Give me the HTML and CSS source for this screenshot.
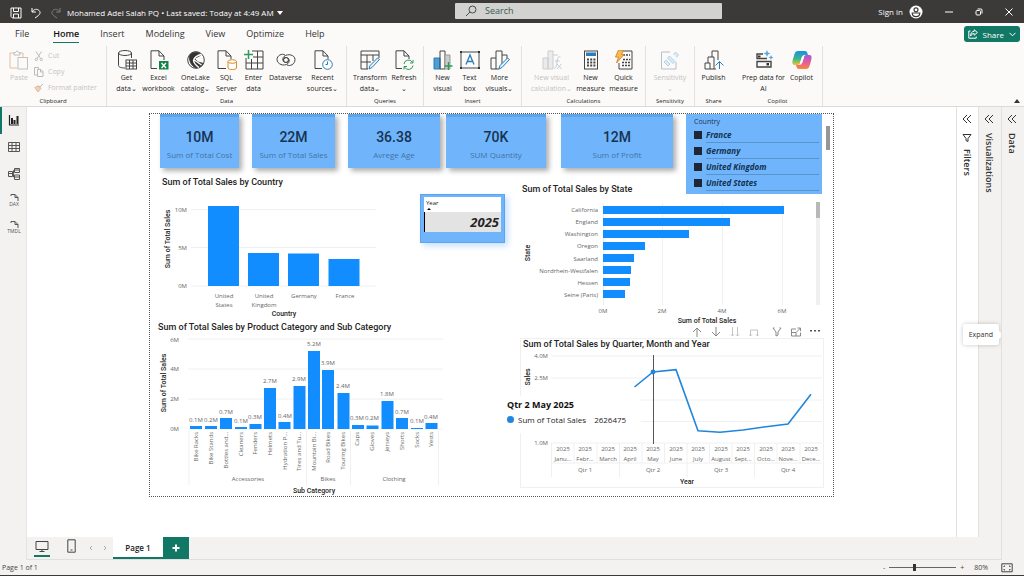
FILE: index.html
```html
<!DOCTYPE html>
<html lang="en">
<head>
<meta charset="utf-8">
<title>Mohamed Adel Salah PQ</title>
<link rel="stylesheet" href="styles.css">
</head>
<body>
<div class="app">
  <header class="titlebar">
    <div class="title-left">
      <button class="tb-btn" aria-label="Save"><svg width="12" height="12" viewBox="0 0 12 12" class="ln"><path d="M1 1h10v10H2.500L1 9.500zM3.500 1v3.500h5V1M3.500 11V7h5v4"/></svg></button>
      <button class="tb-btn" aria-label="Undo"><svg width="12" height="12" viewBox="0 0 12 12" class="ln"><path d="M2 1v4h4M2 5c2-3 5-3.500 7-1.500s1.500 4-4 7.500"/></svg></button>
      <button class="tb-btn dim" aria-label="Redo"><svg width="12" height="12" viewBox="0 0 12 12" class="ln"><path d="M10 1v4H6M10 5c-2-3-5-3.500-7-1.500s-1.500 4 4 7.500"/></svg></button>
      <button class="doc-name">Mohamed Adel Salah PQ • Last saved: Today at 4:49 AM <svg width="6" height="4" viewBox="0 0 6 4"><path d="M0 0h6L3 4z" fill="#fff"/></svg></button>
    </div>
    <label class="search"><svg width="12" height="12" viewBox="0 0 12 12" class="ln"><circle cx="7.500" cy="4.500" r="3.500"/><path d="M5 7L1 11"/></svg><input type="search" placeholder="Search" aria-label="Search"></label>
    <div class="title-right">
      <button class="signin">Sign in <svg width="14" height="14" viewBox="0 0 14 14"><circle cx="7" cy="7" r="6.500" fill="#fff"/><circle cx="7" cy="4.800" r="2" fill="none" stroke="#3b3a39" stroke-width="1.200"/><path d="M3.200 8h7.600c0 2.500-1.600 3.600-3.800 3.600S3.200 10.500 3.200 8z" fill="none" stroke="#3b3a39" stroke-width="1.200"/></svg></button>
      <button class="win-btn" aria-label="Minimize"><svg width="8" height="8" viewBox="0 0 8 8" class="ln"><path d="M0 4h8"/></svg></button>
      <button class="win-btn" aria-label="Restore"><svg width="8" height="8" viewBox="0 0 8 8" class="ln"><rect x="1" y="2.500" width="4.500" height="4.500" rx="1"/><path d="M2.500 1h3.500q1 0 1 1v3.500"/></svg></button>
      <button class="win-btn" aria-label="Close"><svg width="8" height="8" viewBox="0 0 8 8" class="ln"><path d="M.5.5l7 7M7.500.5l-7 7"/></svg></button>
    </div>
  </header>

  <nav class="menu">
    <a href="#">File</a><a href="#" class="active">Home</a><a href="#">Insert</a><a href="#">Modeling</a><a href="#">View</a><a href="#">Optimize</a><a href="#">Help</a>
    <button class="share"><svg width="10" height="10" viewBox="0 0 10 10" class="ln"><path d="M2.500 2H.8v7.200h7.400V7.500M6.200.8l3.200 2.700-3.200 2.700V4.600C4.500 4.600 3.500 5.200 2.600 7c0-2.800 1.400-4.600 3.600-4.700z"/></svg>Share<svg width="7" height="5" viewBox="0 0 7 5" class="ln"><path d="M.5.8l3 3 3-3"/></svg></button>
  </nav>

  <section class="ribbon" aria-label="Home ribbon">
    <div class="group g-clip">
      <div class="tools">
        <button class="tool disabled w-paste"><svg viewBox="0 0 20 20" class="ico"><path d="M6 3H1v15h7M10 3h4v4" stroke="#e9a070"/><path d="M5 5V2.500h1.500L8 .8l1.500 1.700H11V5z" stroke="#aaa"/><rect x="9" y="7.500" width="9.500" height="11.500" stroke="#aaa"/></svg>Paste</button>
        <div class="clip-list">
          <button><svg viewBox="0 0 10 10" class="mini"><path d="M2 .5l4.500 7M7.500.5L3 7.500"/><circle cx="2.300" cy="8.400" r="1.200"/><circle cx="7.300" cy="8.400" r="1.200"/></svg>Cut</button>
          <button><svg viewBox="0 0 10 10" class="mini"><path d="M3 8H.5V.5h4V2M3.500 2.500h3.500l2 2v5H3.500zM6.500 2.500V5H9"/></svg>Copy</button>
          <button><svg viewBox="0 0 10 10" class="mini"><path d="M.8 4.500L4 3l2.500 3L4 9z" fill="#f4d2b6" stroke="#e6b893"/><path d="M4.500 2.500l2.500 3M6 3.800L9 1"/></svg>Format painter</button>
        </div>
      </div>
      <h2>Clipboard</h2>
    </div>
    <div class="group g-data">
      <div class="tools">
        <button class="tool w-26"><svg viewBox="0 0 20 20" class="ico"><ellipse cx="8" cy="3" rx="6.500" ry="2.500"/><path d="M1.500 3v12.500C1.500 17 4 18 8 18M14.500 3v5"/><rect x="9" y="10" width="10.500" height="9" fill="#fff"/><path d="M9 13h10.500M9 16h10.500M12.500 10v9M16 10v9"/></svg>Get<br>data⌄</button>
        <button class="tool w-38"><svg viewBox="0 0 20 20" class="ico"><path d="M8 18.500H2V.8h8L15 6v4M10 .8V6h5"/><rect x="10" y="11" width="9.500" height="8.500" fill="#14834a" stroke="none"/><path d="M12.500 13l4.500 5M17 13l-4.500 5" stroke="#fff" stroke-width="1.300"/></svg>Excel<br>workbook</button>
        <button class="tool w-36"><svg viewBox="0 0 20 20" class="ico"><circle cx="10" cy="10" r="8.300"/><path d="M3.500 6Q5 1 12 2.500 14 3 15 5L8.500 8.500Q11 13 17.500 13.500 14 19 9 17.500 3 14 3.500 6z" fill="#333"/><path d="M15.500 4.500Q9 5.500 7.500 10.500 8 14 13 17.500M7.500 9.500l8 5.500" stroke="#fff" stroke-width="1.400"/></svg>OneLake<br>catalog⌄</button>
        <button class="tool w-26"><svg viewBox="0 0 20 20" class="ico"><path d="M9 18.500H1V.8h8L14 6v3M9 .8V6h5"/><path d="M11 11.500v6.500c0 2 8.500 2 8.500 0v-6.500" fill="#fff" stroke="#d98a2b"/><ellipse cx="15.200" cy="11.500" rx="4.200" ry="1.800" fill="#fff" stroke="#d98a2b"/></svg>SQL<br>Server</button>
        <button class="tool w-28"><svg viewBox="0 0 20 20" class="ico"><path d="M8 1h11v18H2V8M2 13h17M9 7h10M7.500 9v10M13.500 1v18"/><path d="M4.500 0v9M0 4.500h9" stroke="#2f9b58" stroke-width="1.500"/></svg>Enter<br>data</button>
        <button class="tool w-36"><svg viewBox="0 0 20 20" class="ico"><path d="M12.500 10a2.500 2.500 0 1 1-2-2.500c3 .5 3.500 4 1.500 6C8 17 1 14 1 9.500 1 5.500 6 3 9 5M7.500 10a2.500 2.500 0 1 1 2 2.500c-3-.5-3.500-4-1.500-6C12 3 19 5 19 9.500c0 5-5 7-8 5.500"/></svg>Dataverse</button>
        <button class="tool w-38"><svg viewBox="0 0 20 20" class="ico"><path d="M9 18.500H2V.8h8L15 6v3M10 .8V6h5"/><circle cx="14.500" cy="14.500" r="4.800" fill="#fff" stroke="#2b7cb8"/><path d="M14.500 11.500v3h-2" stroke="#2b7cb8"/></svg>Recent<br>sources⌄</button>
      </div>
      <h2>Data</h2>
    </div>
    <div class="group g-query">
      <div class="tools">
        <button class="tool w-38"><svg viewBox="0 0 20 20" class="ico"><path d="M8 19H1V1h18v7M1 5h18M1 12h10M7 5v14M13 5v6"/><path d="M19.500 9.500L12 17.500l-3 1.500.8-3.200L17.500 8z" fill="#e4f1fa" stroke="#2b7cb8"/></svg>Transform<br>data⌄</button>
        <button class="tool w-30"><svg viewBox="0 0 20 20" class="ico"><path d="M8 18.500H2V.8h8L15 6v3M10 .8V6h5"/><path d="M10 14a4.500 4.500 0 0 1 8.500-1.500M19 10v3h-3M19 15.500a4.500 4.500 0 0 1-8.500 1.500M10 19.500v-3h3" stroke="#2f9b58"/></svg>Refresh<br>⌄</button>
      </div>
      <h2>Queries</h2>
    </div>
    <div class="group g-insert">
      <div class="tools">
        <button class="tool w-28"><svg viewBox="0 0 20 20" class="ico"><path d="M1 8h6v11H1z" fill="#4a9fd8" stroke="#2b7cb8"/><path d="M7 1h5v18H7z"/><path d="M12 5h5v14h-5z" fill="#ccc" stroke="#999"/><path d="M15.500 12v8M11.500 16h8" stroke="#2f9b58" stroke-width="1.400"/></svg>New<br>visual</button>
        <button class="tool w-26"><svg viewBox="0 0 20 20" class="ico"><rect x="1" y="2" width="18" height="16"/><path d="M6 14.500L10 5l4 9.500M7.500 11.500h5" stroke="#2b7cb8" stroke-width="1.300"/><path d="M0 1h2v2H0zM18 1h2v2h-2zM0 17h2v2H0zM18 17h2v2h-2z" fill="#333" stroke="none"/></svg>Text<br>box</button>
        <button class="tool w-34"><svg viewBox="0 0 20 20" class="ico"><path d="M9 19H1V8h5v11M6 8V1h6v13M12 5h5v4"/><path d="M19.500 9.500L12 17.500l-3 1.500.8-3.200L17.500 8z" fill="#e4f1fa" stroke="#2b7cb8"/></svg>More<br>visuals⌄</button>
      </div>
      <h2>Insert</h2>
    </div>
    <div class="group g-calc">
      <div class="tools">
        <button class="tool disabled w-44"><svg viewBox="0 0 20 20" class="ico"><path d="M1 8h5v11H1zM6 1h5v18H6z" fill="#e6e6e6" stroke="#bbb"/><path d="M11 5h5" stroke="#bbb"/><path d="M18.500 7c-3-1-3 2-3.500 5s-1 7-3 6M13 11h4.500M15 14l4.500 5M19.500 14L15 19" stroke="#a9bccb"/></svg>New visual<br>calculation⌄</button>
        <button class="tool w-34"><svg viewBox="0 0 20 20" class="ico"><rect x="3.500" y="1" width="13" height="18"/><path d="M5 2.500h10v3.500H5z" fill="#2b7cb8" stroke="none"/><path d="M6 9.500h8.500M6 12.500h8.500M6 15.500h8.500" stroke-width="2" stroke-dasharray="2 1.200"/></svg>New<br>measure</button>
        <button class="tool w-32"><svg viewBox="0 0 20 20" class="ico"><path d="M8 1h10v18H5v-6"/><path d="M9 5h7M9 9.500h7.500M8 12.500h8.500M8 15.500h8.500" stroke-width="1.600" stroke-dasharray="2 1"/><path d="M4.500 0h5L7.500 4.500H10L2.500 13 4.500 7H1.500z" fill="#f5bd58" stroke="#d98a2b"/></svg>Quick<br>measure</button>
      </div>
      <h2>Calculations</h2>
    </div>
    <div class="group g-sens">
      <div class="tools">
        <button class="tool disabled w-40"><svg viewBox="0 0 20 20" class="ico"><path d="M10 2H1.500v17H16v-7" stroke="#9ab"/><path d="M13.500 4.500l2-2.500 3 3-2 2.500M9.500 6l5.500 5.500-2 2L7.500 8zM6 10l4 4-2 2-4-4z" fill="#cfe6f6" stroke="#8fc3e6"/></svg>Sensitivity<br>⌄</button>
      </div>
      <h2>Sensitivity</h2>
    </div>
    <div class="group g-share">
      <div class="tools">
        <button class="tool w-32"><svg viewBox="0 0 20 20" class="ico"><path d="M12 19H1v-6h5v6M4 13V7h6v12M8 7V1h6v9"/><path d="M15.500 19v-7M11.500 15.500l4-4 4 4" stroke="#2b7cb8"/></svg>Publish</button>
      </div>
      <h2>Share</h2>
    </div>
    <div class="group g-copilot">
      <div class="tools">
        <button class="tool w-48"><svg viewBox="0 0 20 20" class="ico"><path d="M9 4H3v4.500h10M3 11.500h14V17H3z" stroke-width="1.400"/><path d="M4 5.500h2.500v2H4zM12.500 13H15v2.500h-2.500z" fill="#333" stroke="none"/><path d="M13 0l1 2.500L16.500 3.500 14 4.500 13 7l-1-2.500-2.500-1L12 2.500zM17 5l.8 1.700L19.500 7.500l-1.700.8L17 10l-.8-1.700-1.700-.8 1.700-.8z" fill="#5aa9dc" stroke="none"/></svg>Prep data for<br>AI</button>
        <button class="tool w-28"><svg viewBox="0 0 20 20" class="ico"><defs><linearGradient id="cpa" x1="0" y1="0" x2="0" y2="1"><stop offset="0" stop-color="#1a8fe6"/><stop offset=".55" stop-color="#38b78c"/><stop offset="1" stop-color="#f0c52b"/></linearGradient><linearGradient id="cpb" x1="0" y1="0" x2="0" y2="1"><stop offset="0" stop-color="#a356e0"/><stop offset=".6" stop-color="#ef5f8e"/><stop offset="1" stop-color="#f78b3c"/></linearGradient></defs><path d="M6 1h7c2 0 2.500 2 3 4h-3c-2 0-3 1-3.500 3L8 13c-.5 1.500-1.500 2-3 2H3c-3 0-3-2.500-2-6l1.500-5C3.200 2 4 1 6 1z" fill="url(#cpa)" stroke="none"/><path d="M14 19H7c-2 0-2.500-2-3-4h3c2 0 3-1 3.500-3L12 7c.5-1.500 1.500-2 3-2h2c3 0 3 2.500 2 6l-1.500 5c-.7 2-1.500 3-3.500 3z" fill="url(#cpb)" stroke="none"/><path d="M12 7l-2 6H8l2-6z" fill="#fff" stroke="none"/></svg>Copilot</button>
      </div>
      <h2>Copilot</h2>
    </div>
    <button class="collapse" aria-label="Collapse ribbon"><svg width="6" height="4" viewBox="0 0 6 4"><path d="M0 4l3-4 3 4z" fill="#333"/></svg></button>
  </section>

  <div class="body">
    <nav class="rail">
      <button class="on" aria-label="Report view"><svg viewBox="0 0 12 12" class="ln"><path d="M1.500 1v10h9.500" stroke-width="1.200"/><path d="M4 4v6M6.500 6v4M9.500 2v8" stroke-width="2"/></svg></button>
      <button aria-label="Table view"><svg viewBox="0 0 12 12" class="ln"><path d="M.5 1.500h11v9H.5zM.5 4.500h11M.5 7.500h11M4 1.500v9M8 1.500v9"/></svg></button>
      <button aria-label="Model view"><svg viewBox="0 0 12 12" class="ln"><path d="M.5 3.500h4v5h-4zM.5 5.500h4M6.500.5h5v4h-5zM6.500 2h5M6.500 7h5v4.500h-5zM6.500 9h5M4.500 5.500h1v-3h1M5.500 5.500v3.500h1"/></svg></button>
      <button aria-label="DAX query view"><svg viewBox="0 0 12 12" class="ln"><path d="M3 2V.5h4l3 3V7M7 .5v3h3"/></svg><small>DAX</small></button>
      <button aria-label="TMDL view"><svg viewBox="0 0 12 12" class="ln"><path d="M3 2V.5h4l3 3V7M7 .5v3h3"/></svg><small>TMDL</small></button>
    </nav>

    <div class="center">
      <div class="stage">
        <main class="workspace">
          <div class="canvas">
            <div class="cards">
              <article class="card c1"><strong>10M</strong><span>Sum of Total Cost</span></article>
              <article class="card c2"><strong>22M</strong><span>Sum of Total Sales</span></article>
              <article class="card c3"><strong>36.38</strong><span>Avrege Age</span></article>
              <article class="card c4"><strong>70K</strong><span>SUM Quantity</span></article>
              <article class="card c5"><strong>12M</strong><span>Sum of Profit</span></article>
              <fieldset class="country">
                <legend>Country</legend>
                <label><input type="checkbox"><span>France</span></label>
                <label><input type="checkbox"><span>Germany</span></label>
                <label><input type="checkbox"><span>United Kingdom</span></label>
                <label><input type="checkbox"><span>United States</span></label>
              </fieldset>
              <div class="thumb"></div>
            </div>
            <div class="visuals">
              <div class="left">
                <div class="top-left">
                  <section class="by-country">
                    <h3>Sum of Total Sales by Country</h3>
                    <svg viewBox="150 188 270 131" class="chart" role="img" aria-label="Sum of Total Sales by Country">
                      <path class="grid" d="M191 209.500h185M191 247.500h185M191 286h185"/>
                      <g class="bars"><rect x="208" y="206" width="31" height="80"/><rect x="248" y="253" width="31" height="33"/><rect x="288" y="253.500" width="31" height="32.500"/><rect x="328.500" y="259" width="31" height="27"/></g>
                      <g class="lab end"><text x="187" y="212">10M</text><text x="187" y="250">5M</text><text x="187" y="288">0M</text></g>
                      <g class="lab mid"><text x="224" y="298">United</text><text x="224" y="307">States</text><text x="264" y="298">United</text><text x="264" y="307">Kingdom</text><text x="304" y="298">Germany</text><text x="345" y="298">France</text></g>
                      <text class="axis" x="284" y="316">Country</text>
                      <text class="axis" transform="translate(170 239) rotate(-90)">Sum of Total Sales</text>
                    </svg>
                  </section>
                  <table class="year"><thead><tr><th scope="col">Year<svg width="4" height="2" viewBox="0 0 4 2"><path d="M0 2l2-2 2 2z"/></svg></th></tr></thead><tbody><tr><td>2025</td></tr></tbody></table>
                </div>
                <section class="by-category">
                  <h3>Sum of Total Sales by Product Category and Sub Category</h3>
                  <svg viewBox="150 333 358 163" class="chart" role="img" aria-label="Sum of Total Sales by Product Category and Sub Category">
                    <path class="grid" d="M188 339h255M188 369h255M188 399h255M188 429h255M189 431v54M306.500 431v54M350.500 431v54M438.500 431v54"/>
                    <g class="bars"><rect x="190" y="426" width="12" height="3"/><rect x="205" y="426" width="12" height="3"/><rect x="220" y="418" width="12" height="11"/><rect x="235" y="427" width="12" height="2"/><rect x="249.500" y="424" width="12" height="5"/><rect x="264" y="388" width="12" height="41"/><rect x="278.500" y="422" width="12" height="7"/><rect x="293.500" y="386" width="12" height="43"/><rect x="308" y="351" width="12" height="78"/><rect x="322" y="370" width="12" height="59"/><rect x="337.500" y="393" width="12" height="36"/><rect x="352" y="425" width="12" height="4"/><rect x="366.500" y="425.500" width="12" height="3.500"/><rect x="381.500" y="401" width="12" height="28"/><rect x="396" y="418" width="12" height="11"/><rect x="411" y="428" width="12" height="1"/><rect x="425.500" y="423" width="12" height="6"/></g>
                    <g class="lab end"><text x="179" y="342">6M</text><text x="179" y="371">4M</text><text x="179" y="401">2M</text><text x="179" y="431">0M</text></g>
                    <g class="lab mid"><text x="196" y="422">0.1M</text><text x="211" y="422">0.2M</text><text x="226" y="414">0.7M</text><text x="241" y="423">0.1M</text><text x="255" y="419">0.3M</text><text x="270" y="383">2.7M</text><text x="285" y="418">0.4M</text><text x="299" y="381">2.9M</text><text x="314" y="346">5.2M</text><text x="328" y="365">3.9M</text><text x="343" y="388">2.4M</text><text x="357" y="420">0.3M</text><text x="372" y="420">0.2M</text><text x="387" y="396">1.8M</text><text x="402" y="414">0.7M</text><text x="417" y="423">0.1M</text><text x="431" y="419">0.4M</text></g>
                    <g class="lab end"><text transform="translate(198 432) rotate(-90)">Bike Racks</text><text transform="translate(213 432) rotate(-90)">Bike Stands</text><text transform="translate(228 432) rotate(-90)">Bottles and...</text><text transform="translate(243 432) rotate(-90)">Cleaners</text><text transform="translate(257 432) rotate(-90)">Fenders</text><text transform="translate(272 432) rotate(-90)">Helmets</text><text transform="translate(287 432) rotate(-90)">Hydration P...</text><text transform="translate(301 432) rotate(-90)">Tires and Tu...</text><text transform="translate(316 432) rotate(-90)">Mountain Bi...</text><text transform="translate(330 432) rotate(-90)">Road Bikes</text><text transform="translate(345 432) rotate(-90)">Touring Bikes</text><text transform="translate(359 432) rotate(-90)">Caps</text><text transform="translate(374 432) rotate(-90)">Gloves</text><text transform="translate(389 432) rotate(-90)">Jerseys</text><text transform="translate(404 432) rotate(-90)">Shorts</text><text transform="translate(419 432) rotate(-90)">Socks</text><text transform="translate(433 432) rotate(-90)">Vests</text></g>
                    <g class="lab mid"><text x="248" y="481">Accessories</text><text x="328" y="481">Bikes</text><text x="394" y="481">Clothing</text></g>
                    <text class="axis" x="314" y="493">Sub Category</text>
                    <text class="axis" transform="translate(166 383) rotate(-90)">Sum of Total Sales</text>
                  </svg>
                </section>
              </div>
              <div class="right">
                <section class="by-state">
                  <h3>Sum of Total Sales by State</h3>
                  <svg viewBox="508 195 325 131" class="chart" role="img" aria-label="Sum of Total Sales by State">
                    <path class="grid" d="M603.500 203v102M662.500 203v102M722.500 203v102M782.500 203v102"/>
                    <g class="bars"><rect x="603" y="206" width="181" height="8"/><rect x="603" y="218" width="127" height="8"/><rect x="603" y="230" width="86" height="8"/><rect x="603" y="242" width="42" height="8"/><rect x="603" y="254" width="31" height="8"/><rect x="603" y="266" width="28" height="8"/><rect x="603" y="278" width="27" height="8"/><rect x="603" y="290" width="22" height="8"/></g>
                    <g class="lab end"><text x="598" y="212">California</text><text x="598" y="224">England</text><text x="598" y="236">Washington</text><text x="598" y="248">Oregon</text><text x="598" y="261">Saarland</text><text x="598" y="273">Nordrhein-Westfalen</text><text x="598" y="285">Hessen</text><text x="598" y="297">Seine (Paris)</text></g>
                    <g class="lab mid"><text x="603" y="313">0M</text><text x="662" y="313">2M</text><text x="722" y="313">4M</text><text x="782" y="313">6M</text></g>
                    <text class="axis" x="707" y="323">Sum of Total Sales</text>
                    <text class="axis" transform="translate(530 253) rotate(-90)">State</text>
                    <rect x="816" y="202" width="4" height="103" fill="#f0f0f0"/><rect x="816" y="202" width="4" height="16" fill="#b8b8b8"/>
                  </svg>
                </section>
                <div class="vis-tools">
                  <button aria-label="Drill up"><svg viewBox="0 0 10 10" class="ln"><path d="M5 10V1M1 5l4-4 4 4"/></svg></button>
                  <button aria-label="Drill down"><svg viewBox="0 0 10 10" class="ln"><path d="M5 0v9M1 5l4 4 4-4"/></svg></button>
                  <button class="soft" aria-label="Next level"><svg viewBox="0 0 10 10" class="ln"><path d="M2.500 0v9M1 7.500L2.500 9 4 7.500M7.500 0v9M6 7.500L7.500 9 9 7.500"/></svg></button>
                  <button class="soft" aria-label="Expand all"><svg viewBox="0 0 10 10" class="ln"><path d="M1.500 9V3h7v6M0 7.500L1.500 9 3 7.500M7 7.500L8.500 9 10 7.500"/></svg></button>
                  <button class="wide" aria-label="Filters on visual"><svg viewBox="0 0 10 10" class="ln"><path d="M1 1l3 4v4l2-1V5l3-4M1 1h1.500M7.500 1H9"/></svg></button>
                  <button aria-label="Focus mode"><svg viewBox="0 0 10 10" class="ln"><path d="M5 2H.5v7h9V5.500M6.500 1h3v3M9.500 1L5 5.500M.5 5.500H5V9"/></svg></button>
                  <button aria-label="More options"><svg viewBox="0 0 10 10"><path d="M0 3h2v1.500H0zM4 3h2v1.500H4zM8 3h2v1.500H8z" fill="#555"/></svg></button>
                </div>
                <section class="by-quarter">
                  <h3>Sum of Total Sales by Quarter, Month and Year</h3>
                  <svg viewBox="521 350 302 137" class="chart" role="img" aria-label="Sum of Total Sales by Quarter, Month and Year">
                    <path class="grid" d="M551 356h271M551 378h271M551 400h271M551 421.500h271M551 443h271M551.500 443v34M619.500 443v34M687 443v34M754.500 443v34M574 443v20M597 443v20M642 443v20M664.500 443v20M709.500 443v20M732 443v20M777 443v20M800 443v20M551 463h271"/>
                    <path d="M653.500 355v89" stroke="#555"/>
                    <polyline points="634.500,387 653,372 676,369.700 698,430.700 720,432.300 743,430 766,426.700 788,424 811,394.300" fill="none" stroke="#1f86dc" stroke-width="1.600"/>
                    <circle cx="653" cy="372" r="2.400" fill="#1f86dc"/>
                    <g class="lab end"><text x="548" y="358">4.0M</text><text x="548" y="380">2.5M</text><text x="548" y="445">1.0M</text></g>
                    <g class="lab mid"><text x="563" y="451">2025</text><text x="585" y="451">2025</text><text x="608" y="451">2025</text><text x="630" y="451">2025</text><text x="653" y="451">2025</text><text x="676" y="451">2025</text><text x="698" y="451">2025</text><text x="721" y="451">2025</text><text x="743" y="451">2025</text><text x="766" y="451">2025</text><text x="788" y="451">2025</text><text x="811" y="451">2025</text>
                    <text x="563" y="461">Janu...</text><text x="585" y="461">Febr...</text><text x="608" y="461">March</text><text x="630" y="461">April</text><text x="653" y="461">May</text><text x="676" y="461">June</text><text x="698" y="461">July</text><text x="721" y="461">August</text><text x="743" y="461">Sept...</text><text x="766" y="461">Octo...</text><text x="788" y="461">Nove...</text><text x="811" y="461">Dece...</text>
                    <text x="585" y="472">Qtr 1</text><text x="653" y="472">Qtr 2</text><text x="721" y="472">Qtr 3</text><text x="788" y="472">Qtr 4</text></g>
                    <text class="axis" x="687" y="484">Year</text>
                    <text class="axis" transform="translate(530 377) rotate(-90)">Sales</text>
                  </svg>
                  <div class="tip"><strong>Qtr 2 May 2025</strong><p><i></i><span>Sum of Total Sales</span><span>2626475</span></p></div>
                </section>
              </div>
            </div>
          </div>
        </main>
        <aside class="pane filters"><button aria-label="Expand filters"><svg viewBox="0 0 10 10" class="ln"><path d="M5 1L1 5l4 4M9 1L5 5l4 4"/></svg></button><svg viewBox="0 0 10 10" class="ln funnel"><path d="M1 1.500h8L6 5.500v3l-2-1v-2z"/></svg><h2>Filters</h2></aside>
        <aside class="pane"><button aria-label="Expand visualizations"><svg viewBox="0 0 10 10" class="ln"><path d="M5 1L1 5l4 4M9 1L5 5l4 4"/></svg></button><h2>Visualizations</h2><div class="expand" role="tooltip">Expand</div></aside>
      </div>
      <footer class="pages">
        <button class="view on" aria-label="Desktop layout"><svg width="14" height="12" viewBox="0 0 14 12" class="ln"><path d="M1 1.500h12v8H1zM4.500 11.500h5M7 9.500v2"/></svg></button>
        <button class="view" aria-label="Mobile layout"><svg width="9" height="14" viewBox="0 0 9 14" class="ln"><path d="M.8.8h7.400v12.400H.8zM3.500 11h2"/></svg></button>
        <button class="nav" aria-label="Previous page"><svg width="4" height="6" viewBox="0 0 4 6" class="ln"><path d="M3 1L1 3l2 2"/></svg></button>
        <button class="nav" aria-label="Next page"><svg width="4" height="6" viewBox="0 0 4 6" class="ln"><path d="M1 1l2 2-2 2"/></svg></button>
        <button class="page">Page 1</button>
        <button class="add" aria-label="New page"><svg width="8" height="8" viewBox="0 0 8 8"><path d="M4 .5v7M.5 4h7" stroke="#fff" stroke-width="2"/></svg></button>
      </footer>
    </div>
    <aside class="pane data"><button aria-label="Expand data"><svg viewBox="0 0 10 10" class="ln"><path d="M5 1L1 5l4 4M9 1L5 5l4 4"/></svg></button><h2>Data</h2></aside>
  </div>

  <footer class="status">
    <span>Page 1 of 1</span>
    <div class="zoom"><button aria-label="Zoom out">-</button><input type="range" min="10" max="200" value="80" aria-label="Zoom"><button aria-label="Zoom in">+</button><output>80%</output><button class="fit" aria-label="Fit to page"><svg width="12" height="10" viewBox="0 0 12 10" class="ln"><path d="M.8.8h10.400v8H.8zM3 4V3h1M8 3h1v1M9 6v1H8M4 7H3V6"/></svg></button></div>
  </footer>
</div>
</body>
</html>
```
FILE: styles.css
```css
* { box-sizing: border-box; }
body { margin: 0; font-family: "Open Sans", "Noto Sans", sans-serif; font-size: 8px; color: #252423; background: #f3f2f1; }
button, input { font: inherit; color: inherit; }
button { border: 0; background: none; padding: 0; }
h2, h3, p { margin: 0; font-weight: 400; }
svg { display: block; flex: none; }
.ln { fill: none; stroke: currentColor; stroke-width: 1; }

.app { display: flex; flex-direction: column; min-height: 100vh; border-bottom: 1px solid #3b3a39; }

.titlebar { display: grid; grid-template-columns: 455fr 267fr 302fr; height: 23px; background: #3b3a39; color: #fff; }
.title-left { display: flex; align-items: center; gap: 8px; padding: 2px 0 0 10px; }
.tb-btn.dim { opacity: .35; }
.doc-name { display: flex; align-items: center; gap: 3px; margin-left: -3px; white-space: nowrap; }
.search { display: flex; align-items: center; gap: 8px; margin: 3px 0 4px; padding: 0 10px; background: #d2d2d0; color: #44504c; border-radius: 1px; }
.search input { flex: 1; min-width: 0; border: 0; padding: 0; background: none; font-size: 9px; line-height: 14px; outline: 0; }
.search input::placeholder { color: #3b5a50; opacity: 1; }
.title-right { display: flex; align-items: center; justify-content: flex-end; gap: 22px; padding-right: 11px; }
.signin { display: flex; align-items: center; gap: 6px; }

.menu { display: flex; align-items: center; gap: 21px; height: 22px; padding: 0 4px 0 15px; background: #fbfaf9; font-size: 9px; }
.menu a { color: #333; text-decoration: none; line-height: 17px; border-bottom: 1px solid transparent; }
.menu .active { color: #111; font-weight: 600; border-color: #117865; margin-left: 3px; }
.share { display: flex; align-items: center; gap: 5px; height: 16px; margin-left: auto; padding: 0 4px; border-radius: 3px; background: #117865; color: #fff; font-size: 8px; }

.ribbon { display: flex; height: 62px; background: #fbfaf9; border-bottom: 1px solid #dcdad8; padding-top: 1px; }
.group { display: flex; flex-direction: column; justify-content: space-between; border-right: 1px solid #e3e1df; }
.group h2 { text-align: center; font-size: 6px; line-height: 9px; }
.g-clip { width: 107px; }
.g-data { width: 240px; }
.g-data .tools { padding-left: 2px; }
.g-query { width: 77px; }
.g-insert { width: 98px; }
.g-calc { width: 124px; }
.g-calc .tools { padding-left: 2px; }
.g-sens { width: 49px; }
.g-share { width: 38px; border-color: transparent; }
.g-copilot { width: 90px; }
.tools { display: flex; justify-content: center; }
.tool { align-self: flex-start; font-size: 7px; line-height: 11px; white-space: nowrap; text-align: center; }
.ico { width: 20px; height: 20px; margin: 4px auto 2px; fill: none; stroke: #444; stroke-width: 1; }
.disabled { color: #c4c2c0; }
.disabled .ico { opacity: .7; }
.w-26 { width: 26px; }
.w-28 { width: 28px; }
.w-30 { width: 30px; }
.w-32 { width: 32px; }
.w-34 { width: 34px; }
.w-36 { width: 36px; }
.w-38 { width: 38px; }
.w-40 { width: 40px; }
.w-44 { width: 44px; }
.w-48 { width: 48px; }
.w-paste { width: 28px; }
.clip-list { display: flex; flex-direction: column; width: 68px; padding-top: 2px; color: #c4c2c0; font-size: 7px; line-height: 16px; }
.clip-list button { display: flex; align-items: center; gap: 4px; padding-left: 1px; white-space: nowrap; }
.mini { width: 10px; height: 10px; fill: none; stroke: #bbb; }
.collapse { margin: auto 4px 3px auto; }

.body { display: flex; flex: 1; }
.rail { display: flex; flex-direction: column; width: 27px; background: #f3f2f1; border-right: 1px solid #e6e4e2; color: #555; }
.rail button { display: flex; flex-direction: column; align-items: center; justify-content: center; height: 27px; padding-bottom: 2px; border-left: 2px solid transparent; }
.rail button svg { width: 12px; height: 12px; }
.rail .on { border-color: #117865; color: #222; }
.rail small { font-size: 5px; line-height: 5px; margin-top: -4px; }
.center { display: flex; flex-direction: column; flex: 1; min-width: 0; }
.stage { display: flex; flex: 1; }
.workspace { flex: 1; min-width: 0; padding: 6px 122px; background: #fff; }
.canvas { border: 1px dotted #555; }

.cards { display: flex; height: 54px; padding-left: 10px; align-items: flex-start; }
.card { display: flex; flex-direction: column; align-items: center; justify-content: center; gap: 3px; height: 54px; min-width: 0; padding-top: 4px; background: #70b5fc; border-top: 3px solid #5fa3ea; box-shadow: 3px 3px 5px rgba(0,0,0,.32); white-space: nowrap; }
.card strong { font: 500 14px/17px Roboto, sans-serif; color: #173350; }
.card span { font-size: 8px; line-height: 11px; color: #4473a3; }
.c1 { flex: 79 1 0; margin-right: 13px; }
.c2 { flex: 83 1 0; margin-right: 13px; }
.c3 { flex: 92 1 0; margin-right: 6px; }
.c4 { flex: 100 1 0; margin-right: 15px; }
.c5 { flex: 112 1 0; margin-right: 13px; }
.country { flex: 125 1 0; min-width: 0; height: 80px; margin: 0; padding: 3px 3px 0 8px; border: 0; background: #70b5fc; z-index: 1; }
.country legend { float: left; width: 100%; padding: 0; font-size: 7px; line-height: 10px; color: #234; }
.country label { display: flex; align-items: center; gap: 4px; clear: both; height: 16px; }
.country span { flex: 1; font: italic 700 8px/15px "Open Sans", sans-serif; color: #12304f; border-bottom: 1px solid #5893cf; }
.country input { appearance: none; width: 8px; height: 8px; margin: 0; background: #1d2733; }
.thumb { width: 4px; height: 24px; margin: 12px 3px 0 4px; background: #969696; }

.visuals { display: grid; grid-template-columns: 358fr 325fr; }
.visuals h3 { font: 500 9px/12px Roboto, sans-serif; white-space: nowrap; color: #252423; }
.chart { width: 100%; height: auto; }
.left { padding-top: 8px; }
.top-left { display: flex; align-items: flex-start; }
.by-country { flex: 270 1 0; min-width: 0; }
.by-country h3 { padding-left: 12px; }
.by-category { padding-top: 2px; }
.by-category h3 { padding-left: 8px; }
.right { padding-top: 15px; min-width: 0; }
.by-state h3 { padding-left: 14px; }
.grid { fill: none; stroke: #f0f0f0; }
.bars { fill: #118dff; }
.lab { font: 6px "Open Sans", sans-serif; fill: #666; }
.end { text-anchor: end; }
.mid { text-anchor: middle; }
.axis { font: 500 7px Roboto, sans-serif; fill: #252423; text-anchor: middle; }

.year { flex: 77 1 0; height: 49px; margin: 18px 3px 0 0; padding: 2px 3px 10px; border: 1px solid #5fa3ea; border-spacing: 0; background: #70b5fc; box-shadow: 3px 3px 6px rgba(112,181,252,.4); }
.year th { height: 15px; padding: 0 2px; background: #fff; text-align: left; font-size: 6px; line-height: 9px; font-weight: 400; }
.year th svg { margin-left: 1px; }
.year td { padding: 0 2px; background: #e3e3e3; border-left: 1px solid #000; text-align: right; font: italic 700 13px/19px "Open Sans", sans-serif; }

.vis-tools { display: flex; justify-content: flex-end; gap: 9px; height: 12px; padding: 1px 13px 1px 0; color: #888; }
.vis-tools svg { width: 10px; height: 10px; }
.vis-tools .soft { opacity: .5; }
.vis-tools .wide { margin-left: 4px; }
.by-quarter { position: relative; margin: 0 9px 0 12px; border: 1px solid #f0f0f0; }
.by-quarter h3 { padding-left: 2px; line-height: 11px; }
.tip { position: absolute; left: -17px; top: 57px; width: 137px; padding: 2px 0 5px 3px; background: #fff; white-space: nowrap; }
.tip strong { display: block; font-size: 9px; line-height: 13px; color: #111; }
.tip p { display: flex; align-items: center; gap: 4px; font-size: 8px; line-height: 17px; }
.tip i { width: 7px; height: 7px; border-radius: 50%; background: #1f86dc; }
.tip span + span { margin-left: 4px; }

.pane { position: relative; display: flex; flex-direction: column; align-items: center; width: 23px; padding: 7px 2px 0 0; border-left: 1px solid #e3e1df; background: #f3f2f1; color: #333; }
.pane svg { width: 10px; height: 10px; }
.pane h2 { writing-mode: vertical-rl; margin-top: 9px; font-size: 9px; line-height: 12px; font-weight: 600; }
.filters { width: 22px; background: #fff; }
.filters .funnel { margin-top: 9px; }
.filters h2 { margin-top: 6px; }
.expand { position: absolute; right: 2px; top: 217px; padding: 0 6px; border-radius: 2px; background: #fff; box-shadow: 0 0 4px rgba(0,0,0,.22); font-size: 7px; line-height: 21px; }
.expand::after { content: ""; position: absolute; right: -4px; top: 6px; border: 5px solid transparent; border-left-color: #fff; border-right: 0; }

.pages { display: flex; height: 23px; padding-left: 7px; border-bottom: 1px solid #e1dfdd; color: #444; }
.view { display: flex; align-items: center; justify-content: center; width: 16px; margin: 0 6px 2px 0; border-bottom: 2px solid transparent; }
.view.on { margin-right: 13px; border-color: #117865; }
.nav { width: 14px; padding-left: 4px; color: #aaa; }
.page { width: 50px; background: #fff; border-bottom: 2px solid #117865; font-weight: 600; color: #222; }
.add { display: flex; align-items: center; justify-content: center; width: 26px; background: #117865; }

.status { display: flex; justify-content: space-between; align-items: center; height: 15px; padding: 0 11px 0 2px; font-size: 7px; color: #444; }
.zoom { display: flex; align-items: center; gap: 4px; }
.zoom input { appearance: none; width: 67px; height: 1px; margin: 0; background: #666; }
.zoom input::-webkit-slider-thumb { appearance: none; width: 3px; height: 7px; background: #333; }
.zoom output { margin-left: 6px; }
.fit { margin-left: 9px; }
```
